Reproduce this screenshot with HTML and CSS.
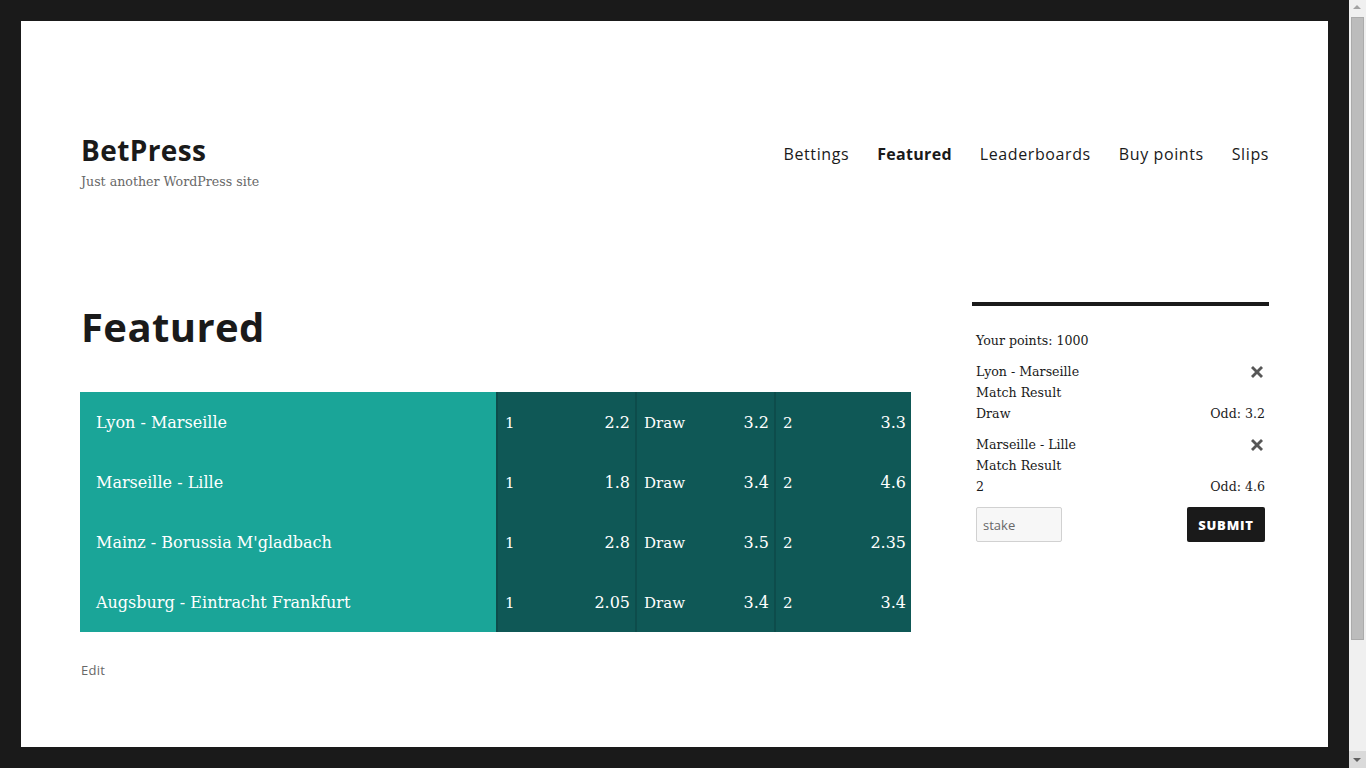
FILE: index.html
```html
<!DOCTYPE html>
<html lang="en">
<head>
<meta charset="utf-8">
<title>Featured – BetPress</title>
<link rel="stylesheet" href="styles.css">
</head>
<body>
<div class="screen">
  <div class="site">
    <div class="page">
      <header class="site-header">
        <div class="branding">
          <p class="site-title">BetPress</p>
          <p class="site-description">Just another WordPress site</p>
        </div>
        <nav class="main-nav">
          <a href="#">Bettings</a>
          <a href="#" class="current">Featured</a>
          <a href="#">Leaderboards</a>
          <a href="#">Buy points</a>
          <a href="#">Slips</a>
        </nav>
      </header>
      <div class="content">
        <main class="main">
          <h1 class="entry-title">Featured</h1>
          <div class="odds">
            <div class="match">Lyon - Marseille</div>
            <div class="bet"><span>1</span><span>2.2</span></div>
            <div class="bet"><span>Draw</span><span>3.2</span></div>
            <div class="bet"><span>2</span><span>3.3</span></div>

            <div class="match">Marseille - Lille</div>
            <div class="bet"><span>1</span><span>1.8</span></div>
            <div class="bet"><span>Draw</span><span>3.4</span></div>
            <div class="bet"><span>2</span><span>4.6</span></div>

            <div class="match">Mainz - Borussia M'gladbach</div>
            <div class="bet"><span>1</span><span>2.8</span></div>
            <div class="bet"><span>Draw</span><span>3.5</span></div>
            <div class="bet"><span>2</span><span>2.35</span></div>

            <div class="match">Augsburg - Eintracht Frankfurt</div>
            <div class="bet"><span>1</span><span>2.05</span></div>
            <div class="bet"><span>Draw</span><span>3.4</span></div>
            <div class="bet"><span>2</span><span>3.4</span></div>
          </div>
          <a href="#" class="edit-link">Edit</a>
        </main>
        <aside class="sidebar">
          <div class="widget">
            <p class="points">Your points: 1000</p>
            <div class="slip-item">
              <div class="slip-line"><span>Lyon - Marseille</span>
                <svg class="remove" width="14" height="14" viewBox="0 0 14 14"><path d="M3 1 L7 5 L11 1 L13 3 L9 7 L13 11 L11 13 L7 9 L3 13 L1 11 L5 7 L1 3 Z" fill="#575757"/></svg>
              </div>
              <div class="slip-line"><span>Match Result</span></div>
              <div class="slip-line"><span>Draw</span><span>Odd: 3.2</span></div>
            </div>
            <div class="slip-item">
              <div class="slip-line"><span>Marseille - Lille</span>
                <svg class="remove" width="14" height="14" viewBox="0 0 14 14"><path d="M3 1 L7 5 L11 1 L13 3 L9 7 L13 11 L11 13 L7 9 L3 13 L1 11 L5 7 L1 3 Z" fill="#575757"/></svg>
              </div>
              <div class="slip-line"><span>Match Result</span></div>
              <div class="slip-line"><span>2</span><span>Odd: 4.6</span></div>
            </div>
            <form class="slip-form">
              <input type="text" class="stake" placeholder="stake">
              <button type="button" class="submit">Submit</button>
            </form>
          </div>
        </aside>
      </div>
    </div>
  </div>
  <div class="scrollbar">
    <div class="sb-up"></div>
    <div class="sb-track"><div class="sb-thumb"></div></div>
    <div class="sb-down"></div>
  </div>
</div>
</body>
</html>
```
FILE: styles.css
```css
html, body {
  margin: 0;
  padding: 0;
  height: 100%;
  overflow: hidden;
}
p { margin: 0; }

.screen {
  display: flex;
  width: 1366px;
  height: 768px;
}

.site {
  flex: 1;
  background: #1a1a1a;
  padding: 21px;
  box-sizing: border-box;
}

.page {
  background: #fff;
  height: 100%;
  box-sizing: border-box;
  padding: 112px 59px 0 59px;
  color: #1a1a1a;
}

/* header */
.site-header {
  display: flex;
  justify-content: space-between;
  align-items: flex-start;
}
.site-title {
  font-family: "Open Sans", "DejaVu Sans", sans-serif;
  font-weight: 700;
  font-size: 28px;
  line-height: 35px;
  letter-spacing: 0.4px;
  margin-left: 1px;
}
.site-description {
  font-family: "DejaVu Serif", serif;
  font-size: 12.6px;
  line-height: 21px;
  color: #686868;
  margin-top: 3px;
  margin-left: 1px;
}
.main-nav {
  display: flex;
  gap: 28px;
}
.main-nav a {
  font-family: "Open Sans", "DejaVu Sans", sans-serif;
  font-size: 16px;
  line-height: 42px;
  color: #1a1a1a;
  text-decoration: none;
  letter-spacing: 0.6px;
}
.main-nav a.current {
  font-weight: 700;
  letter-spacing: 0.3px;
}

/* content */
.content {
  display: flex;
  justify-content: space-between;
  align-items: flex-start;
  margin-top: 110px;
}
.main {
  width: 831px;
}
.entry-title {
  font-family: "Open Sans", "DejaVu Sans", sans-serif;
  font-weight: 700;
  font-size: 40px;
  line-height: 49px;
  margin: 0 0 41px 1px;
  letter-spacing: 0.4px;
}

.odds {
  display: grid;
  grid-template-columns: 416px 139px 139px 1fr;
  grid-auto-rows: 60px;
  font-family: "DejaVu Serif", serif;
  font-size: 16px;
  color: #fff;
}
.match {
  background: #1aa598;
  display: flex;
  align-items: center;
  padding: 0 0 0 16px;
}
.bet {
  background: #0f5856;
  border-left: 2px solid #0d4c4b;
  display: flex;
  align-items: center;
  justify-content: space-between;
  padding: 1px 5px 0 7px;
}
.bet span:first-child {
  font-size: 15px;
}

.edit-link {
  display: inline-block;
  margin-top: 28px;
  font-family: "Open Sans", "DejaVu Sans", sans-serif;
  font-size: 13px;
  line-height: 21px;
  color: #686868;
  text-decoration: none;
  margin-left: 1px;
  letter-spacing: 0.3px;
}

/* sidebar */
.sidebar {
  width: 297px;
}
.widget {
  border-top: 4px solid #1a1a1a;
  padding: 24px 4px 0 4px;
  font-family: "DejaVu Serif", serif;
  font-size: 12.6px;
  line-height: 21px;
  color: #1a1a1a;
}
.points {
  margin-bottom: 10px;
}
.slip-item {
  margin-bottom: 10px;
}
.slip-line {
  display: flex;
  justify-content: space-between;
  align-items: center;
  height: 21px;
}
.remove {
  display: block;
  margin-right: 1px;
  margin-top: 1px;
}
.slip-form {
  display: flex;
  justify-content: space-between;
  align-items: center;
  margin: 0;
}
.stake {
  width: 86px;
  height: 35px;
  box-sizing: border-box;
  background: #f7f7f7;
  border: 1px solid #d1d1d1;
  border-radius: 2px;
  padding: 0 6px;
  font-family: "Open Sans", "DejaVu Sans", sans-serif;
  font-size: 13px;
  color: #686868;
}
.stake::placeholder {
  color: #686868;
}
.submit {
  width: 78px;
  height: 35px;
  background: #1a1a1a;
  color: #fff;
  border: 0;
  border-radius: 2px;
  font-family: "Open Sans", "DejaVu Sans", sans-serif;
  font-weight: 800;
  font-size: 13px;
  text-transform: uppercase;
  letter-spacing: 0.8px;
  padding: 0;
}

/* scrollbar imitation */
.scrollbar {
  width: 17px;
  height: 768px;
  background: #f0f0f0;
  display: flex;
  flex-direction: column;
}
.sb-up {
  height: 17px;
  position: relative;
}
.sb-up::after {
  content: "";
  position: absolute;
  left: 4px;
  top: 5px;
  border-left: 4px solid transparent;
  border-right: 4px solid transparent;
  border-bottom: 4px solid #a3a3a3;
}
.sb-track {
  flex: 1;
  padding: 0 2px;
}
.sb-thumb {
  height: 623px;
  background: #bcbcbc;
  border: 1px solid #ababab;
  box-sizing: border-box;
}
.sb-down {
  height: 17px;
  background: #dadada;
  position: relative;
}
.sb-down::after {
  content: "";
  position: absolute;
  left: 4px;
  top: 7px;
  border-left: 4px solid transparent;
  border-right: 4px solid transparent;
  border-top: 4px solid #606060;
}
```
